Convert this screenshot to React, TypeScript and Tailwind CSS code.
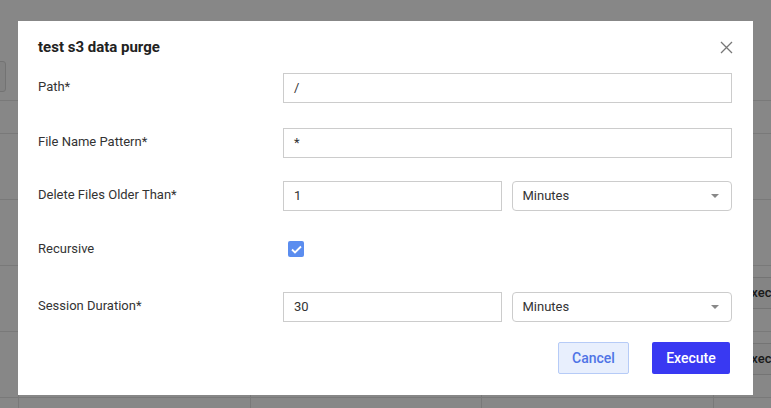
import React from "react";

type FieldRowProps = {
  label: string;
  className?: string;
  children: React.ReactNode;
};

function FieldRow({ label, className = "", children }: FieldRowProps) {
  return (
    <div className={`flex items-start ${className}`}>
      <label className="w-[245px] shrink-0 pt-[5px] text-[13px] leading-[18px] text-[#333]">
        {label}
      </label>
      <div className="flex flex-1 gap-[10px]">{children}</div>
    </div>
  );
}

function TextBox({ value, className = "" }: { value: string; className?: string }) {
  return (
    <div
      className={`flex h-[30px] items-center border border-[#cccccc] bg-white px-[10px] text-[13px] text-[#333] ${className}`}
    >
      {value}
    </div>
  );
}

function SelectBox({ value }: { value: string }) {
  return (
    <div className="flex h-[30px] flex-1 items-center justify-between rounded-[4px] border border-[#cccccc] bg-white pl-[10px] pr-[12px] text-[13px] text-[#333]">
      <span>{value}</span>
      <svg width="8" height="4" viewBox="0 0 8 4">
        <path d="M0 0h8L4 4z" fill="#888" />
      </svg>
    </div>
  );
}

// grid of the jobs table sitting behind the dialog
function BackgroundTable() {
  const rowCells = (children?: React.ReactNode) => (
    <div className="grid h-full grid-cols-[18px_232px_231px_232px_58px]">
      <div />
      <div className="border-l border-[#e4e4e4]" />
      <div className="border-l border-[#e4e4e4]" />
      <div className="border-l border-[#e4e4e4]" />
      <div className="relative border-l border-[#e4e4e4]">{children}</div>
    </div>
  );
  const execButton = (
    <div className="absolute left-[17px] top-[11px] flex h-[32px] w-[80px] items-center rounded-[3px] border border-[#dcdcdc] bg-[#fafafa] pl-[12px] text-[13px] font-medium text-[#333]">
      Execute
    </div>
  );
  return (
    <div className="h-[408px] w-full bg-white">
      <div className="relative h-[101px] border-b border-[#e4e4e4]">
        <div className="absolute left-[-4px] top-[61px] h-[31px] w-[10px] rounded-[3px] border border-[#dadada] bg-[#f5f5f5]" />
      </div>
      <div className="h-[33px] border-b border-[#e4e4e4]" />
      <div className="h-[66px] border-b border-[#e4e4e4]" />
      <div className="h-[66px] border-b border-[#e4e4e4]" />
      <div className="h-[66px] border-b border-[#e4e4e4]">{rowCells(execButton)}</div>
      <div className="h-[66px] border-b border-[#e4e4e4]">{rowCells(execButton)}</div>
      <div className="h-[20px]">{rowCells()}</div>
    </div>
  );
}

export default function App() {
  return (
    <div
      className="relative h-[408px] w-full overflow-hidden"
      style={{ fontFamily: "Roboto, 'Liberation Sans', sans-serif" }}
    >
      <BackgroundTable />
      <div className="absolute inset-0 bg-black/[0.47]" />

      <div className="absolute left-[18px] right-[18px] top-[21px] bg-white pb-[21px] pl-[20px] pr-[21px] pt-[16px]">
        <div className="flex items-center justify-between">
          <h2 className="text-[15px] font-bold leading-[20px] text-[#222]">test s3 data purge</h2>
          <svg width="13" height="13" viewBox="0 0 13 13" className="mr-[-1px]">
            <path d="M1 1l11 11M12 1L1 12" stroke="#777" strokeWidth="1.3" />
          </svg>
        </div>

        <FieldRow label="Path*" className="mt-[16px]">
          <TextBox value="/" className="flex-1" />
        </FieldRow>

        <FieldRow label="File Name Pattern*" className="mt-[25px]">
          <TextBox value="*" className="flex-1" />
        </FieldRow>

        <FieldRow label="Delete Files Older Than*" className="mt-[23px]">
          <TextBox value="1" className="flex-1" />
          <SelectBox value="Minutes" />
        </FieldRow>

        <div className="mt-[23px] flex h-[30px] items-center">
          <span className="w-[245px] shrink-0 text-[13px] leading-[18px] text-[#333]">Recursive</span>
          <div className="ml-[5px] flex h-[16px] w-[16px] items-center justify-center rounded-[2px] bg-[#5b8def]">
            <svg width="11" height="9" viewBox="0 0 11 9">
              <path d="M1 4.5l3 3L10 1.5" stroke="#fff" strokeWidth="1.8" fill="none" />
            </svg>
          </div>
        </div>

        <FieldRow label="Session Duration*" className="mt-[28px]">
          <TextBox value="30" className="flex-1" />
          <SelectBox value="Minutes" />
        </FieldRow>

        <div className="mt-[20px] flex justify-end gap-[23px] pr-[2px]">
          <button className="h-[32px] w-[71px] rounded-[2px] border border-[#b6cbf7] bg-[#e8effd] text-[14px] font-medium text-[#4f74e6]">
            Cancel
          </button>
          <button className="h-[32px] w-[78px] rounded-[2px] bg-[#3939f2] text-[14px] font-medium text-white">
            Execute
          </button>
        </div>
      </div>
    </div>
  );
}
